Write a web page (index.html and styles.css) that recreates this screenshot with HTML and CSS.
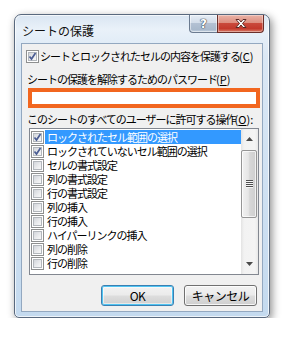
FILE: index.html
```html
<!DOCTYPE html>
<html>
  <head>
    <meta charset="utf-8" />
    <title>シートの保護</title>
    <link rel="stylesheet" href="styles.css">
  </head>
  <body>
    <div class="page">
      <div class="window">
        <div class="titlebar">
          <span class="title">シートの保護</span>
          <div class="caption">
            <span class="cap-btn cap-help">?</span>
            <span class="cap-btn cap-close">
              <svg width="14" height="11" viewBox="0 0 14 11">
                <path d="M2 1.5h3l2 2.5 2-2.5h3l-3.5 4 3.5 4h-3l-2-2.5-2 2.5h-3l3.5-4z" fill="#fff" stroke="#5b2a26" stroke-width="1" stroke-linejoin="round"/>
              </svg>
            </span>
          </div>
        </div>

        <div class="client">
          <div class="check-row">
            <span class="cb checked">
              <svg width="11" height="11" viewBox="0 0 11 11"><path d="M2.5 5.5l2 2.5 4-6" fill="none" stroke="#4b5d93" stroke-width="1.7"/></svg>
            </span>
            <span class="label">シートとロックされたセルの内容を保護する<span class="key">(<u>C</u>)</span></span>
          </div>

          <div class="field-label">シートの保護を解除するためのパスワード<span class="key">(<u>P</u>)</span></div>
          <div class="password"></div>

          <div class="field-label field-label--list">このシートのすべてのユーザーに許可する操作<span class="key">(<u>O</u>):</span></div>
          <div class="listbox">
            <ul class="items">
              <li class="item item--sel">
                <span class="cb checked"><svg width="11" height="11" viewBox="0 0 11 11"><path d="M2.5 5.5l2 2.5 4-6" fill="none" stroke="#4b5d93" stroke-width="1.7"/></svg></span>
                <span class="text">ロックされたセル範囲の選択</span>
              </li>
              <li class="item">
                <span class="cb checked"><svg width="11" height="11" viewBox="0 0 11 11"><path d="M2.5 5.5l2 2.5 4-6" fill="none" stroke="#4b5d93" stroke-width="1.7"/></svg></span>
                <span class="text">ロックされていないセル範囲の選択</span>
              </li>
              <li class="item"><span class="cb"></span><span class="text">セルの書式設定</span></li>
              <li class="item"><span class="cb"></span><span class="text">列の書式設定</span></li>
              <li class="item"><span class="cb"></span><span class="text">行の書式設定</span></li>
              <li class="item"><span class="cb"></span><span class="text">列の挿入</span></li>
              <li class="item"><span class="cb"></span><span class="text">行の挿入</span></li>
              <li class="item"><span class="cb"></span><span class="text">ハイパーリンクの挿入</span></li>
              <li class="item"><span class="cb"></span><span class="text">列の削除</span></li>
              <li class="item"><span class="cb"></span><span class="text">行の削除</span></li>
            </ul>
            <div class="scrollbar">
              <div class="arrow arrow--up"><svg width="7" height="4" viewBox="0 0 7 4"><path d="M0 4h7L3.5 0z" fill="#4a4a4a"/></svg></div>
              <div class="thumb">
                <span class="grip"></span>
              </div>
              <div class="track"></div>
              <div class="arrow arrow--down"><svg width="7" height="4" viewBox="0 0 7 4"><path d="M0 0h7L3.5 4z" fill="#4a4a4a"/></svg></div>
            </div>
          </div>

          <div class="buttons">
            <button class="btn btn--default">OK</button>
            <button class="btn">キャンセル</button>
          </div>
        </div>
      </div>
    </div>
  </body>
</html>
```

FILE: styles.css
```css
body {
  margin: 0;
  background: #fff;
  font-family: "Noto Sans CJK JP", "Noto Sans", sans-serif;
  color: #000;
}

.page {
  padding: 14px 0 0 14px;
}

/* window frame */
.window {
  width: 256px;
  height: 304px;
  box-sizing: border-box;
  display: flex;
  flex-direction: column;
  padding: 0 6px 5px;
  border: 1px solid #59697e;
  border-radius: 7px 7px 5px 5px;
  background: linear-gradient(180deg, #d9e5f2 0, #e9f1f9 14px, #dbe8f5 40px, #c4daef 100%);
  box-shadow: 2px 3px 9px rgba(0, 0, 0, 0.45), inset 0 0 0 1px rgba(255, 255, 255, 0.7);
}

.titlebar {
  height: 28px;
  display: flex;
  justify-content: space-between;
  align-items: flex-start;
}

.title {
  margin: 9px 0 0 1px;
  font-size: 12px;
  line-height: 14px;
  color: #111;
}

.caption {
  display: flex;
  margin-right: -1px;
}

.cap-btn {
  height: 18px;
  box-sizing: border-box;
  display: flex;
  align-items: center;
  justify-content: center;
  border: 1px solid #6b7b90;
  border-top: none;
}

.cap-help {
  width: 28px;
  border-right: none;
  border-radius: 0 0 0 4px;
  background: linear-gradient(180deg, #e6edf5 0%, #d3dde9 45%, #b3c1d3 50%, #a9b9cc 85%, #c2d0df 100%);
  box-shadow: inset 0 0 0 1px rgba(255, 255, 255, 0.5);
  font-family: "DejaVu Sans", sans-serif;
  font-weight: bold;
  font-size: 12px;
  line-height: 12px;
  color: #fff;
  text-shadow: 0 0 1px #33404f, 0 0 1px #33404f, 0 0 1px #33404f;
}

.cap-close {
  width: 47px;
  border-color: #6a2f2a;
  border-radius: 0 0 4px 0;
  background: linear-gradient(180deg, #eab2a6 0%, #dd8f80 45%, #c9493b 50%, #c3392c 80%, #d9806b 100%);
  box-shadow: inset 0 0 0 1px rgba(255, 255, 255, 0.35);
}

/* client area */
.client {
  flex: 1;
  box-sizing: border-box;
  border: 1px solid #93a8c0;
  background: #f0f0f0;
  font-size: 11px;
  letter-spacing: -1px;
  display: flex;
  flex-direction: column;
}

.key {
  letter-spacing: 0;
  margin-left: -1px;
}

.check-row {
  display: flex;
  align-items: center;
  margin: 6px 0 0 4px;
  height: 13px;
}

.check-row .label {
  margin-left: 1px;
  line-height: 13px;
}

.cb {
  position: relative;
  flex: none;
  width: 13px;
  height: 13px;
  box-sizing: border-box;
  border: 1px solid #8e8f8f;
  padding: 1px;
  background: #fff;
  display: flex;
}

.cb::before {
  content: "";
  flex: 1;
  border: 1px solid #b3b7bc;
  background: linear-gradient(135deg, #d2d5da 0%, #ebecee 60%, #f7f7f7 100%);
}

.cb svg {
  position: absolute;
  left: 0;
  top: 0;
}

.field-label {
  margin: 9px 0 0 5px;
  line-height: 14px;
}

.field-label--list {
  margin-top: 4px;
}

.password {
  width: 232px;
  height: 20px;
  box-sizing: border-box;
  margin: 2px 0 0 6px;
  border: 4px solid #f2661f;
  background: #fff;
}

/* list with check boxes */
.listbox {
  width: 230px;
  height: 147px;
  box-sizing: border-box;
  margin: 2px 0 0 7px;
  border: 1px solid #828790;
  background: #fff;
  display: flex;
}

.items {
  list-style: none;
  margin: 0;
  padding: 1px 0 0;
  flex: 1;
}

.item {
  display: flex;
  align-items: center;
  height: 14px;
  padding-left: 1px;
}

.item .text {
  flex: 1;
  margin-left: 1px;
  padding-left: 2px;
  height: 14px;
  line-height: 14px;
  white-space: nowrap;
}

.item--sel .text {
  background: #3399ff;
  color: #fff;
}

.scrollbar {
  width: 17px;
  display: flex;
  flex-direction: column;
  background: linear-gradient(90deg, #e3e3e3 0, #f2f2f2 3px, #f4f4f4 14px, #e8e8e8 100%);
}

.arrow {
  height: 20px;
  display: flex;
  align-items: center;
  justify-content: center;
}

.thumb {
  height: 68px;
  margin: 1px 1px 0 0;
  box-sizing: border-box;
  border: 1px solid #959595;
  border-radius: 2px;
  background: linear-gradient(90deg, #f1f1f1 0%, #e6e6e6 45%, #d7d7d7 55%, #cfcfcf 100%);
  box-shadow: inset 0 0 0 1px rgba(255, 255, 255, 0.7);
  display: flex;
  align-items: center;
  justify-content: center;
}

.grip {
  width: 7px;
  height: 8px;
  background: repeating-linear-gradient(180deg, #4f4f4f 0, #4f4f4f 1px, #f6f6f6 1px, #f6f6f6 2px);
}

.track {
  flex: 1;
}

/* dialog buttons */
.buttons {
  display: flex;
  justify-content: flex-end;
  gap: 10px;
  margin: 10px 5px 0 0;
}

.btn {
  width: 73px;
  height: 21px;
  box-sizing: border-box;
  padding: 0;
  border: 1px solid #707070;
  border-radius: 3px;
  background: linear-gradient(180deg, #f2f2f2 0%, #ebebeb 48%, #dddddd 52%, #cfcfcf 100%);
  box-shadow: inset 0 0 0 1px rgba(255, 255, 255, 0.8);
  font-family: inherit;
  font-size: 12px;
  letter-spacing: -0.5px;
  color: #000;
}

.btn--default {
  border-color: #3c7fb1;
  box-shadow: inset 0 0 0 1px #4fc4f2, inset 0 0 0 2px rgba(255, 255, 255, 0.5);
}
```
